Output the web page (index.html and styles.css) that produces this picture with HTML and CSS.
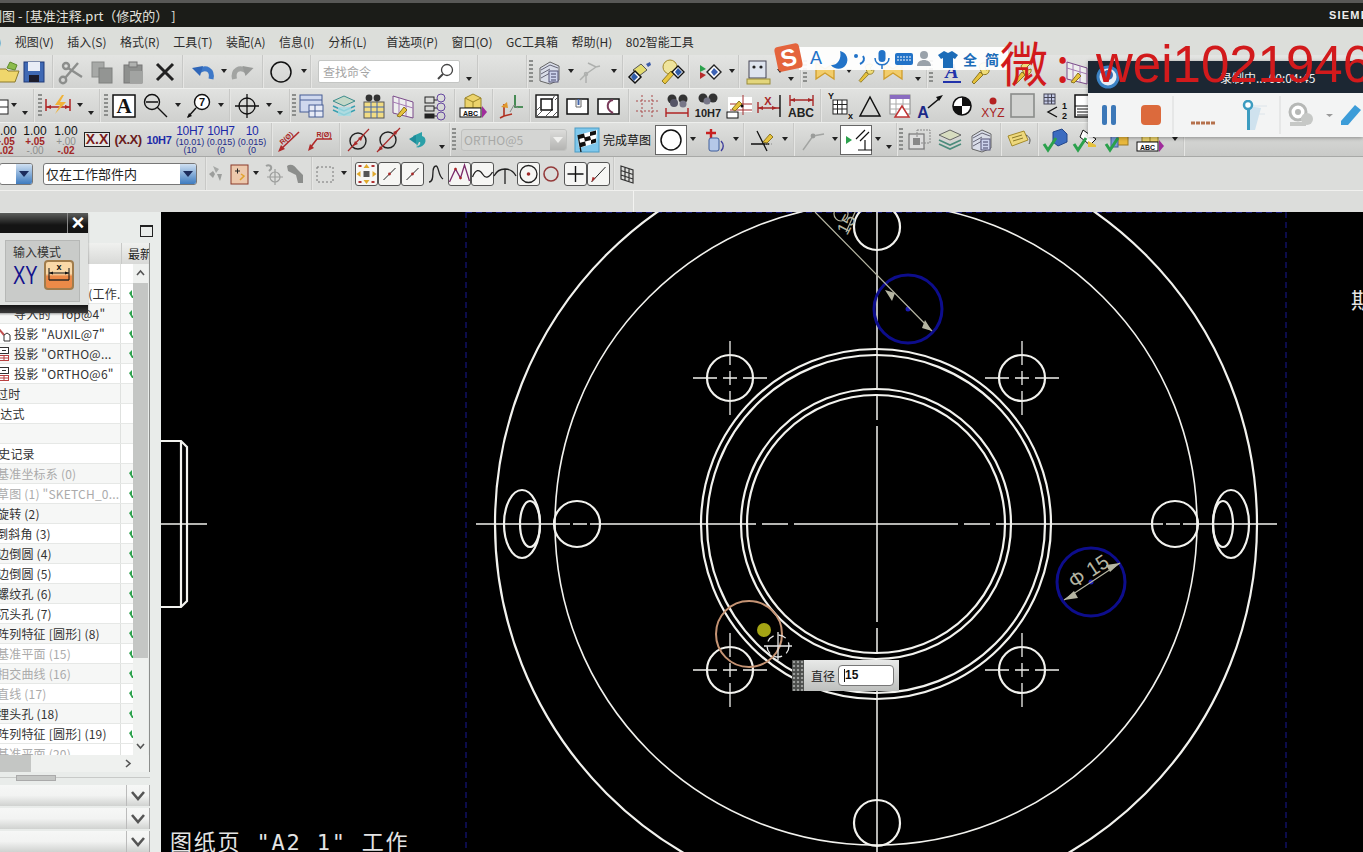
FILE: index.html
```html
<!DOCTYPE html>
<html lang="zh">
<head>
<meta charset="utf-8">
<title>基准注释.prt</title>
<link rel="stylesheet" href="styles.css">
</head>
<body>
<svg class="sprite" aria-hidden="true"><defs>
<g id="folder"><path d="M3 11h9l2 2h11l-4 11H3z" fill="#efd66c" stroke="#8b7a2c"/><path d="M13 10l3-6 7 3-2 5z" fill="#8cbc4c" stroke="#5d8a2c"/></g>
<g id="save"><rect x="4" y="4" width="20" height="20" fill="#3f69b4" stroke="#203a78"/><rect x="8" y="4" width="12" height="9" fill="#e9edf6"/><rect x="9" y="17" width="10" height="7" fill="#1c1c2c"/></g>
<g id="cut" fill="none" stroke="#8c8e8c" stroke-width="2.4"><circle cx="7" cy="22" r="3.2"/><circle cx="10" cy="8" r="3"/><path d="M9 20L22 5M12 10l14 9" /></g>
<g id="copy"><rect x="4" y="4" width="12" height="15" fill="#a7a9a7" stroke="#8a8c8a"/><rect x="11" y="10" width="13" height="15" fill="#939593" stroke="#7e807e"/></g>
<g id="paste"><rect x="5" y="7" width="18" height="18" fill="#8e908e" stroke="#777"/><rect x="10" y="4" width="8" height="5" fill="#b0b2b0" stroke="#777"/><rect x="11" y="13" width="13" height="12" fill="#a2a4a2"/></g>
<path id="del" d="M6 6l16 16M22 6L6 22" stroke="#222" stroke-width="3" fill="none"/>
<g id="undo"><path d="M24 21c2-9-5-13-12-8" fill="none" stroke="#3d78c8" stroke-width="5"/><path d="M5 10l11-2-3 10z" fill="#2f66b8"/></g>
<g id="redo"><path d="M4 21c-2-9 5-13 12-8" fill="none" stroke="#a2a4a2" stroke-width="5"/><path d="M23 10l-11-2 3 10z" fill="#989a98"/></g>
<circle id="circ" cx="14" cy="14" r="10" fill="none" stroke="#111" stroke-width="1.5"/>
<g id="layers"><path d="M5 10l10-6 9 4v14l-9 4-10-3z" fill="#d9dde8" stroke="#666"/><path d="M6 12l9-5 8 3M6 16l9-5M6 20l9-5" stroke="#667" fill="none"/><rect x="14" y="13" width="9" height="11" fill="#cdd3ec" stroke="#557"/><path d="M16 16h5M16 19h5M16 22h5" stroke="#446"/></g>
<g id="csys" fill="none" stroke="#aeb0ae" stroke-width="1.5"><path d="M10 16l10-7M10 16v9M10 16l-6 6M12 5l8 4 4-1"/><circle cx="10" cy="16" r="1.5"/></g>
<g id="eye"><path d="M15 6l6 6-8 6-6-6z" fill="#e4dc70" stroke="#555"/><path d="M20 6l4-2 1 3-3 2z" fill="#3c5ca8"/><path d="M9 13l6 6-6 6-6-6z" fill="#fff" stroke="#111" stroke-width="1.5"/><path d="M8 15l4 4-4 4-3-4z" fill="#2f5ca8"/></g>
<g id="wd"><circle cx="12" cy="9" r="7" fill="#efe49c" stroke="#a38a2a"/><path d="M4 23l9-10 3 3-9 10z" fill="#e9c640" stroke="#8d7a22"/><path d="M20 8l6 6-6 6-6-6z" fill="#fff" stroke="#111" stroke-width="1.4"/><path d="M20 10l4 4-4 4-3-4z" fill="#2f5ca8"/></g>
<g id="ad"><path d="M6 7v7l6-3z" fill="#2ba14c"/><path d="M6 21v-7l6 3z" fill="#b82c2c"/><path d="M20 7l7 7-7 7-7-7z" fill="#fff" stroke="#222" stroke-width="1.4"/><path d="M20 10l4 4-4 4-3-4z" fill="#3c62b4"/></g>
<g id="ruler"><rect x="6" y="3" width="17" height="17" fill="#dee4ee" stroke="#445"/><circle cx="11" cy="9" r="1.6" fill="#222"/><circle cx="18" cy="9" r="1.6" fill="#222"/><rect x="4" y="21" width="23" height="5" fill="#e3d67c" stroke="#998c3a"/></g>
<g id="bow"><path d="M5 5l9 6 9-6v16l-9-6-9 6z" fill="#f2cd6c" stroke="#cf9d2c" stroke-width="1.3"/></g>
<g id="wrench"><path d="M6 24l8-10 3 3-9 9z" fill="#e6c23c" stroke="#8c7622"/><path d="M13 8c2-4 7-4 9-2l-3 3 1 3 3-1c1 4-3 7-7 5z" fill="#efdc78" stroke="#8c7622"/></g>
<g id="aital"><text x="14" y="20" text-anchor="middle" class="it">A</text><path d="M5 24h18" stroke="#2233aa" stroke-width="2"/></g>
<g id="wmap"><path d="M4 4l20 6v16L4 21z" fill="#eee" stroke="#7a4a8a"/><path d="M4 10l20 6M10 6v16M17 8v16" stroke="#a47ab4" fill="none"/><path d="M8 24l7-9 3 3-7 7z" fill="#e6c23c" stroke="#8c7622"/></g>
<g id="piece"><rect x="-3" y="8" width="11" height="14" fill="#fff" stroke="#222"/><path d="M-3 15H8" stroke="#222"/></g>
<g id="dimf"><path d="M2 7v12M26 7v12M2 15h24" stroke="#b02424" stroke-width="1.5" fill="none"/><path d="M2 15l5-2v4zM26 15l-5-2v4z" fill="#b02424"/><path d="M18 3l-7 10h5l-5 9 11-12h-6l4-7z" fill="#f0b238"/></g>
<g id="abox"><rect x="3" y="3" width="22" height="22" fill="#fff" stroke="#111" stroke-width="1.5"/><text x="14" y="21" text-anchor="middle" class="sf">A</text></g>
<g id="zoom"><circle cx="10" cy="10" r="7.5" fill="none" stroke="#111" stroke-width="1.4"/><path d="M4 10h12M15 15l10 10" stroke="#111" stroke-width="1.4"/></g>
<g id="zoom7"><circle cx="17" cy="10" r="7.5" fill="#fff" stroke="#111" stroke-width="1.4"/><text x="17" y="14" text-anchor="middle" class="num">7</text><path d="M11 16L3 25" stroke="#111" stroke-width="1.4"/><path d="M2 26l2-5 3 3z" fill="#111"/></g>
<g id="cross" fill="none" stroke="#111" stroke-width="1.3"><circle cx="14" cy="14" r="8"/><path d="M14 2v24M2 14h24M14 12v4M12 14h4"/></g>
<g id="view"><rect x="3" y="3" width="22" height="17" fill="#cfd8ee" stroke="#465c94"/><rect x="12" y="13" width="14" height="12" fill="#e7ebf6" stroke="#465c94"/><path d="M12 19h14M18 13v12M3 8h22" stroke="#465c94"/></g>
<g id="layt"><path d="M3 9l11-5 11 5-11 5z" fill="#c4d8c8" stroke="#3c8c8c"/><path d="M3 14l11 5 11-5M3 18l11 5 11-5" fill="none" stroke="#38a0b0" stroke-width="1.4"/><rect x="8" y="15" width="13" height="9" fill="#a5dce4" opacity=".8"/></g>
<g id="bint"><rect x="5" y="10" width="20" height="16" fill="#f1dc84" stroke="#555"/><path d="M5 15h20M5 20h20M12 10v16M18 10v16" stroke="#4466aa"/><circle cx="10" cy="6" r="3.4" fill="#333"/><circle cx="18" cy="6" r="3.4" fill="#333"/></g>
<g id="l123" fill="none" stroke="#222"><rect x="3" y="5" width="9" height="6"/><rect x="3" y="14" width="9" height="5"/><rect x="3" y="22" width="9" height="4" fill="#222"/><path d="M12 8h3M12 16h3M12 24h3"/><circle cx="19" cy="6" r="4" stroke="#6648a0"/><circle cx="19" cy="15" r="4" stroke="#6648a0"/><circle cx="19" cy="24" r="4" stroke="#6648a0"/></g>
<g id="cube"><path d="M6 6l8-4 8 4v10H6z" fill="#ecd36c" stroke="#9a8428"/><path d="M6 6l8 4 8-4M14 10v6" stroke="#9a8428" fill="none"/><rect x="1" y="16" width="21" height="9" fill="#fff" stroke="#111"/><text x="11.500" y="24" text-anchor="middle" class="abc">ABC</text><path d="M23 14l5 6-5 6z" fill="#a02c9c"/></g>
<g id="csys2"><path d="M8 24V12M8 24l8-2M8 24l-4 2" stroke="#b03020" stroke-width="1.6" fill="none"/><path d="M19 3v12h8" stroke="#227733" stroke-width="1.6" fill="none"/><path d="M5 15l6-5 1 6z" fill="#e0982c"/><path d="M14 20l4-7 4 3" stroke="#888" fill="none"/></g>
<g id="hatch"><rect x="3" y="3" width="22" height="22" fill="#fff" stroke="#111" stroke-width="1.4"/><path d="M3 25l6-6M3 19l4-4M19 25l6-6M12 25l8-8M22 8l3-3M19 8l3-5" stroke="#555"/><rect x="8" y="7" width="11" height="11" fill="#fff" stroke="#111" stroke-width="1.5"/></g>
<g id="sl1"><rect x="3" y="7" width="21" height="15" fill="#fff" stroke="#111" stroke-width="1.5"/><path d="M12 7v8h5V7" fill="none" stroke="#666"/><rect x="13.500" y="7" width="2" height="6" fill="#4466aa"/></g>
<g id="sl2"><rect x="3" y="7" width="21" height="15" fill="#fff" stroke="#111" stroke-width="1.5"/><path d="M18 8c-6 1-8 9 0 13" fill="none" stroke="#7a3a5a" stroke-width="2"/></g>
<g id="dots" fill="none" stroke="#a84848" stroke-dasharray="2 2"><path d="M3 9h22M3 19h22M9 3v22M19 3v22"/></g>
<g id="bino"><circle cx="9" cy="7" r="4.5" fill="#333"/><circle cx="20" cy="7" r="4.500" fill="#333"/><circle cx="11" cy="11" r="4" fill="#556"/><circle cx="20" cy="12" r="3.500" fill="#778"/><path d="M3 16v9M25 16v9M3 21h22" stroke="#b02424" stroke-width="1.4"/></g>
<g id="bino2"><circle cx="9" cy="6" r="4.500" fill="#333"/><circle cx="19" cy="6" r="4.500" fill="#333"/><circle cx="13" cy="9" r="3.500" fill="#778"/><text x="14" y="25" text-anchor="middle" class="h7" fill="#222">10H7</text></g>
<g id="wtab"><path d="M3 5h24v15H3z" fill="#fff"/><path d="M18 3v20M5 12h22M5 18h22" stroke="#a43030"/><path d="M7 17l7-8 3 3-7 7z" fill="#e6c23c" stroke="#8c7622"/><rect x="2" y="20" width="11" height="6" fill="#fff" stroke="#111"/><circle cx="17" cy="14" r="1.500" fill="#111"/></g>
<g id="xdim"><path d="M3 10v11M3 16h22" stroke="#a82828" stroke-width="1.4"/><path d="M3 16l5-2v4zM22 16l-5-2v4z" fill="#a82828"/><text x="13" y="13" text-anchor="middle" class="x">X</text><path d="M25 3v22" stroke="#111" stroke-width="1.4"/></g>
<g id="abcd"><path d="M3 3v11M26 3v11M3 8h23" stroke="#a82828" stroke-width="1.4"/><path d="M3 8l5-2v4zM26 8l-5-2v4z" fill="#a82828"/><text x="14" y="25" text-anchor="middle" class="abc2">ABC</text></g>
<g id="gridxy"><rect x="8" y="8" width="14" height="14" fill="#fff" stroke="#222"/><path d="M8 12.500h14M8 17h14M12.500 8v14M17 8v14" stroke="#222"/><text x="3" y="7" class="tiny">Y</text><text x="23" y="27" class="tiny">x</text></g>
<path id="tri" d="M14 5l10 19H4z" fill="none" stroke="#111" stroke-width="1.5"/>
<g id="ttri"><rect x="4" y="3" width="20" height="19" fill="#fff" stroke="#888"/><rect x="4" y="3" width="20" height="4" fill="#8a6cc0"/><path d="M4 12h20M4 17h20M10 7v15M17 7v15" stroke="#aaa"/><path d="M16 14l7 11H9z" fill="#fff" stroke="#c03434" stroke-width="1.5"/></g>
<g id="aarrow"><text x="6" y="26" text-anchor="middle" class="ab">A</text><path d="M11 16L23 6" stroke="#111" stroke-width="1.6"/><path d="M26 3l-7 2 3 4z" fill="#111"/></g>
<g id="target"><circle cx="14" cy="14" r="9" fill="#fff" stroke="#111" stroke-width="1.6"/><path d="M14 5a9 9 0 0 1 9 9h-9zM14 23a9 9 0 0 1-9-9h9z" fill="#111"/></g>
<g id="xyz"><circle cx="14" cy="9" r="3.500" fill="#b42222"/><text x="14" y="25" text-anchor="middle" class="xyzt">XYZ</text></g>
<rect id="gsq" x="2" y="2" width="23" height="23" fill="#d2d3d1" stroke="#8a8c8a" stroke-width="1.6"/>
<g id="t12"><rect x="3" y="2" width="11" height="10" fill="#c6cce8" stroke="#445"/><path d="M3 5.500h11M3 9h11M7 2v10M10.500 2v10" stroke="#445"/><path d="M16 15l-9 5 9 5" fill="none" stroke="#111" stroke-width="1.4"/><text x="21" y="17" class="tiny">1</text><text x="21" y="27" class="tiny">2</text></g>
<g id="lines"><rect x="2" y="3" width="23" height="22" fill="#fff" stroke="#111" stroke-width="1.5"/><path d="M2 14h23M4 17h20M4 20h20M4 23h20" stroke="#111"/></g>
<g id="rd1"><path d="M24 6L5 24" stroke="#b02a2a" stroke-width="1.6"/><path d="M3 26l3-7 4 4z" fill="#b02a2a"/><text x="13" y="14" transform="rotate(-42 13 14)" text-anchor="middle" class="r">R(Ø)</text></g>
<g id="rd2"><path d="M26 13H11L4 22" stroke="#b02a2a" stroke-width="1.6" fill="none"/><path d="M2 25l2-7 4 4z" fill="#b02a2a"/><text x="18" y="11" text-anchor="middle" class="r">R(Ø)</text></g>
<g id="dia1"><circle cx="14" cy="15" r="8" fill="none" stroke="#222" stroke-width="1.4"/><path d="M25 3L4 25" stroke="#a82828" stroke-width="1.2"/><path d="M9 20l2-5 3 3zM19 10l-2 5-3-3z" fill="#a82828"/></g>
<g id="dia2"><circle cx="14" cy="14" r="8" fill="none" stroke="#222" stroke-width="1.4"/><path d="M26 2L3 26" stroke="#a82828" stroke-width="1.2"/><path d="M4 25l2-5 3 3zM24 4l-2 5-3-3z" fill="#a82828"/></g>
<g id="tealar"><path d="M10 10l9-4v4c5 1 5 9-2 11-2 1-4 0-4 0 3-1 5-3 4-5H16l-2 4z" fill="#2ba0a8"/><path d="M6 13l7-4v9z" fill="#1f8c9a"/></g>
<g id="flag"><rect x="0" y="0" width="24" height="24" fill="#7fc8ec" stroke="#4d9cc4" transform="translate(2 2)"/><path d="M5 9l19-5 -1 13-17 5z" fill="#fff"/><path d="M5 9l6-1.500 1 4-6 1.500zM17 6l6-1.500v4l-6 1.500zM11 11.500l6-1.500 1 4-6 1.500zM6 17l6-1.500 1 4-6 2zM18 14l5-1.500v4l-5 1.500z" fill="#111"/><path d="M5 9l3 17" stroke="#111" stroke-width="1.3"/></g>
<g id="cyl"><path d="M7 7h10M12 3v9" stroke="#c82020" stroke-width="2.400"/><rect x="10" y="12" width="10" height="13" rx="2" fill="#b5c8e8" stroke="#3f5e9c"/><path d="M22 15c3 3 3 7 0 10" fill="none" stroke="#3f3f9c" stroke-width="1.400"/></g>
<g id="slash"><path d="M3 18h18M9 5l10 20" stroke="#111" stroke-width="1.3"/><path d="M15 16l7-8 3 3-6 6z" fill="#e6c23c" stroke="#8c7622"/><path d="M17 18h8" stroke="#888" stroke-dasharray="1 1"/></g>
<g id="grayl"><path d="M5 24l10-14 11-2" fill="none" stroke="#a2a4a2" stroke-width="1.4"/><circle cx="15" cy="10" r="2.400" fill="#9a9c9a"/></g>
<g id="perp"><path d="M4 10v8l6-4z" fill="#2ba14c"/><path d="M14 13l9-9M18 15l9-9M16 24h14M23 14v10" stroke="#111" fill="none" stroke-width="1.200"/></g>
<g id="sqc"><rect x="4" y="8" width="15" height="15" fill="#ddd" stroke="#777" stroke-width="1.200"/><rect x="8" y="12" width="7" height="7" fill="#888"/><rect x="12" y="4" width="13" height="13" fill="none" stroke="#888" stroke-dasharray="2 1"/><path d="M4 8h.1M19 23h.1" stroke="#444" stroke-width="3"/></g>
<g id="layg"><path d="M3 9l11-5 11 5-11 5z" fill="#d7dcc0" stroke="#666"/><path d="M3 14l11 5 11-5M3 18l11 5 11-5" fill="none" stroke="#4c8c7c" stroke-width="1.600"/></g>
<g id="note"><path d="M4 10l16-5 4 9-16 6z" fill="#eed87c" stroke="#a38a2a"/><path d="M8 12l10-3M9 15l10-3" stroke="#8a7a2a"/><path d="M22 9c4 2 5 5 3 9" stroke="#555" fill="none"/></g>
<g id="chk1"><path d="M12 6l9-3 5 5v8l-9 4-5-4z" fill="#3c6cc0" stroke="#23468a"/><path d="M3 18l4 6 8-12" fill="none" stroke="#2ba14c" stroke-width="3"/></g>
<g id="chk2"><path d="M12 4l13 9-6 6-10-8z" fill="#fff" stroke="#111"/><path d="M3 18l4 6 8-12" fill="none" stroke="#2ba14c" stroke-width="3"/><path d="M17 15l8 4v2h-8z" fill="#e6c23c"/></g>
<g id="chk3"><rect x="14" y="5" width="11" height="14" fill="#e9b83c" stroke="#9a7a22"/><rect x="8" y="10" width="7" height="11" fill="#7a9ad8" stroke="#3f5e9c"/><path d="M3 18l4 6 8-12" fill="none" stroke="#2ba14c" stroke-width="3"/></g>
<g id="sel"><path d="M4 14l4-3 2 3-2 4z" fill="#9c9e9c"/><path d="M12 14l5 0-2 7z" fill="#9c9e9c"/><path d="M8 6l6 3-3 4z" fill="#a6a8a6"/></g>
<g id="sbox"><rect x="6" y="5" width="17" height="19" fill="#ecc8ac" stroke="#8a3a2a"/><path d="M10 11h5M12.500 8.500v5" stroke="#222"/><path d="M16 14l3 2-4 4" stroke="#e0a22c" stroke-width="1.500" fill="none"/></g>
<g id="c1" fill="none" stroke="#9c9e9c" stroke-width="1.200"><circle cx="15" cy="17" r="5"/><path d="M15 9v16M7 17h16"/><path d="M6 6c3-2 6 0 5 3l-2 2" stroke-width="2"/></g>
<g id="c2"><path d="M5 6c4-3 8 0 10 3l6 6v8h-5l-2-8-8-4z" fill="#8c8e8c"/></g>
<g id="dbox"><rect x="6" y="7" width="16" height="15" fill="none" stroke="#777" stroke-dasharray="2 2"/></g>
<g id="m1"><rect x="11" y="11" width="6" height="6" fill="#555"/><path d="M14 4l3 4h-6zM14 24l-3-4h6zM4 14l4-3v6zM24 14l-4 3v-6z" fill="#e0a92c"/><path d="M6 6h3M19 6h3M6 22h3M19 22h3" stroke="#b03030" stroke-width="2"/></g>
<g id="m2"><path d="M8 20L20 8" stroke="#222"/><circle cx="14" cy="14" r="1.400" fill="#a82828"/></g>
<path id="m3" d="M7 22c7 0 1-16 7-16 3 0 2 10 7 13" fill="none" stroke="#222" stroke-width="1.300"/>
<g id="m4"><path d="M4 22l6-13 5 9 4-13 5 16" fill="none" stroke="#7a2a6a" stroke-width="1.300"/><circle cx="10" cy="9" r="1.300" fill="#a22"/><circle cx="15" cy="18" r="1.300" fill="#a22"/></g>
<path id="m5" d="M4 17c3-8 7-8 10-3s6 4 10-2" fill="none" stroke="#222" stroke-width="1.300"/>
<g id="m6" fill="none" stroke="#222" stroke-width="1.300"><path d="M3 16c3-6 7-7 11-7s8 1 11 7M14 9v15"/></g>
<g id="m7"><circle cx="14" cy="14" r="8.500" fill="none" stroke="#222" stroke-width="1.300"/><circle cx="14" cy="14" r="1.800" fill="#a02a2a"/></g>
<circle id="m8" cx="14" cy="14" r="7" fill="none" stroke="#943a3a" stroke-width="1.600"/>
<path id="m9" d="M14 6v16M6 14h16" stroke="#111" stroke-width="1.400"/>
<g id="m10"><path d="M7 22L21 7" stroke="#222"/><path d="M11 18l-4 4 1-5z" fill="#a82828"/></g>
<g id="grid" fill="none" stroke="#333" stroke-width="1.200"><path d="M8 6l12 4v13L8 19zM8 10.500l12 4M8 15l12 4M12 7.500v13M16 9v13"/></g>
<g id="tick"><path d="M2 6l3-3v5l3 3-3 0z" fill="#2ba14c"/></g>
<g id="ortho"><rect x="0.500" y="1.500" width="9" height="6" fill="#fff" stroke="#333"/><path d="M3 4.500h4" stroke="#333"/><rect x="0.500" y="9.500" width="9" height="5" fill="#fff" stroke="#b84040"/><path d="M0 12h10M5 9v6" stroke="#b84040"/></g>
</defs></svg>

<div class="screen">
  <header class="title"><span class="title-text">制图 - [基准注释.prt（修改的） ]</span><span class="siemens">SIEMENS</span></header>
  <nav class="menu">
    <span>文件(F)</span><span>视图(V)</span><span>插入(S)</span><span>格式(R)</span><span>工具(T)</span><span>装配(A)</span><span>信息(I)</span><span>分析(L)</span><span class="g7">首选项(P)</span><span>窗口(O)</span><span>GC工具箱</span><span>帮助(H)</span><span>802智能工具</span>
  </nav>

  <div class="tb r1">
    <svg width="16" height="28" viewBox="6 0 16 28"><use href="#folder"/></svg>
    <svg width="36" height="28" viewBox="0 0 28 28"><use href="#save"/></svg><i class="sep"></i>
    <svg width="32" height="28" viewBox="0 0 28 28"><use href="#cut"/></svg>
    <svg width="32" height="28" viewBox="0 0 28 28"><use href="#copy"/></svg>
    <svg width="30" height="28" viewBox="0 0 28 28"><use href="#paste"/></svg>
    <svg width="34" height="28" viewBox="0 0 28 28"><use href="#del"/></svg><i class="sep"></i>
    <svg width="34" height="28" viewBox="0 0 28 28"><use href="#undo"/></svg><i class="dd"></i>
    <svg width="31" height="28" viewBox="0 0 28 28"><use href="#redo"/></svg><i class="sep m2"></i>
    <svg width="34" height="28" viewBox="0 0 28 28"><use href="#circ"/></svg><i class="dd"></i><i class="sep m1"></i>
    <div class="search"><span>查找命令</span><svg width="20" height="20" viewBox="0 0 20 20"><circle cx="12" cy="8" r="5.500" fill="#fff" stroke="#444" stroke-width="1.300"/><path d="M8 12l-5 5" stroke="#444" stroke-width="2"/></svg></div>
    <i class="ddl m3"></i><i class="sep m3"></i><i class="sep m47"></i><i class="grip m1"></i>
    <svg width="32" height="28" viewBox="0 0 28 28"><use href="#layers"/></svg><i class="dd"></i>
    <svg width="28" height="28" viewBox="0 0 28 28"><use href="#csys"/></svg><i class="dd m4"></i><i class="sep m3"></i>
    <svg width="32" height="28" viewBox="0 0 28 28"><use href="#eye"/></svg>
    <svg width="32" height="28" viewBox="0 0 28 28"><use href="#wd"/></svg><i class="sep"></i>
    <svg width="36" height="28" viewBox="0 0 28 28"><use href="#ad"/></svg><i class="dd"></i><i class="sep m1"></i>
    <svg width="34" height="28" viewBox="0 0 28 28"><use href="#ruler"/></svg><i class="dd"></i><i class="ddl"></i><i class="sep m4"></i><i class="grip m1"></i>
    <svg width="36" height="28" viewBox="0 0 28 28"><use href="#bow"/></svg><i class="dd"></i>
    <svg width="24" height="28" viewBox="0 0 28 28"><use href="#wrench"/></svg>
    <svg width="30" height="28" viewBox="0 0 28 28"><use href="#bow"/></svg><i class="ddl m4"></i><i class="sep m3"></i><i class="grip m1"></i>
    <svg width="38" height="28" viewBox="0 0 28 28"><use href="#aital"/></svg>
    <svg width="18" height="28" viewBox="5 0 18 28"><use href="#wrench"/></svg>
    <svg width="66" height="28" viewBox="0 0 28 28"><use href="#wrench"/></svg>
    <svg width="44" height="28" viewBox="0 0 28 28"><use href="#wmap"/></svg>
  </div>

  <div class="tb r2">
    <svg width="8" height="28" viewBox="0 0 8 28"><use href="#piece"/></svg><i class="dd"></i><i class="ddl"></i><i class="sep m3"></i><i class="grip m3"></i>
    <svg width="32" height="28" viewBox="0 0 28 28"><use href="#dimf"/></svg><i class="dd"></i><i class="ddl"></i><i class="sep m3"></i><i class="grip m3"></i>
    <svg width="32" height="28" viewBox="0 0 28 28"><use href="#abox"/></svg>
    <svg width="32" height="28" viewBox="0 0 28 28"><use href="#zoom"/></svg><i class="dd"></i>
    <svg width="32" height="28" viewBox="0 0 28 28"><use href="#zoom7"/></svg><i class="dd"></i><i class="sep m3"></i>
    <svg width="32" height="28" viewBox="0 0 28 28"><use href="#cross"/></svg><i class="dd"></i><i class="ddl"></i><i class="sep m4"></i><i class="grip m1"></i>
    <svg width="30" height="28" viewBox="0 0 28 28"><use href="#view"/></svg>
    <svg width="36" height="28" viewBox="0 0 28 28"><use href="#layt"/></svg>
    <svg width="22" height="28" viewBox="3 0 22 28"><use href="#bint"/></svg>
    <svg width="38" height="28" viewBox="0 0 28 28"><use href="#wmap"/></svg>
    <svg width="28" height="28" viewBox="0 0 28 28"><use href="#l123"/></svg><i class="sep m4"></i>
    <svg width="34" height="28" viewBox="0 0 28 28"><use href="#cube"/></svg><i class="sep m2"></i>
    <svg width="32" height="28" viewBox="0 0 28 28"><use href="#csys2"/></svg><i class="sep m3"></i>
    <svg width="32" height="28" viewBox="0 0 28 28"><use href="#hatch"/></svg>
    <svg width="30" height="28" viewBox="0 0 28 28"><use href="#sl1"/></svg>
    <svg width="32" height="28" viewBox="0 0 28 28"><use href="#sl2"/></svg><i class="sep m3"></i>
    <svg width="34" height="28" viewBox="0 0 28 28"><use href="#dots"/></svg>
    <svg width="26" height="28" viewBox="1 0 26 28"><use href="#bino"/></svg>
    <svg width="36" height="28" viewBox="0 0 28 28"><use href="#bino2"/></svg>
    <svg width="26" height="28" viewBox="1 0 26 28"><use href="#wtab"/></svg>
    <svg width="34" height="28" viewBox="0 0 28 28"><use href="#xdim"/></svg>
    <svg width="30" height="28" viewBox="0 0 28 28"><use href="#abcd"/></svg><i class="sep m4"></i>
    <svg width="34" height="28" viewBox="0 0 28 28"><use href="#gridxy"/></svg>
    <svg width="28" height="28" viewBox="0 0 28 28"><use href="#tri"/></svg>
    <svg width="32" height="28" viewBox="0 0 28 28"><use href="#ttri"/></svg>
    <svg width="30" height="28" viewBox="0 0 28 28"><use href="#aarrow"/></svg>
    <svg width="32" height="28" viewBox="0 0 28 28"><use href="#target"/></svg>
    <svg width="30" height="28" viewBox="0 0 28 28"><use href="#xyz"/></svg>
    <svg width="30" height="28" viewBox="0 0 28 28"><use href="#gsq"/></svg>
    <svg width="34" height="28" viewBox="0 0 28 28"><use href="#t12"/></svg>
    <svg width="30" height="28" viewBox="0 0 28 28"><use href="#lines"/></svg>
  </div>

  <div class="tb r3">
    <div class="st first"><b>1.00</b><em>+.05</em><em>-.02</em></div>
    <div class="st"><b>1.00</b><em>+.05</em><u>-.00</u></div>
    <div class="st w32"><b>1.00</b><u>+.00</u><em>-.02</em></div>
    <div class="xx"><span>X.X</span></div>
    <div class="xp">(X.X)</div>
    <div class="h">10H7</div>
    <div class="hs w32"><b>10H7</b><span>(10.01)</span><span>(10</span></div>
    <div class="hs"><b>10H7</b><span>(0.015)</span><span>(0</span></div>
    <div class="hs w32"><b>10</b><span>(0.015)</span><span>(0</span></div><i class="sep m3"></i>
    <svg width="32" height="28" viewBox="0 0 28 28"><use href="#rd1"/></svg>
    <svg width="30" height="28" viewBox="0 0 28 28"><use href="#rd2"/></svg><i class="sep m4"></i>
    <svg width="34" height="28" viewBox="0 0 28 28"><use href="#dia1"/></svg>
    <svg width="26" height="28" viewBox="1 0 26 28"><use href="#dia2"/></svg>
    <svg width="32" height="28" viewBox="0 0 28 28"><use href="#tealar"/></svg><i class="ddl m3"></i><i class="sep m2"></i><i class="grip m1"></i>
    <div class="combo off"><span>ORTHO@5</span><i class="cb"></i></div>
    <svg class="m6" width="28" height="28" viewBox="0 0 28 28"><use href="#flag"/></svg>
    <span class="lbl">完成草图</span>
    <div class="ib m4"><svg width="30" height="28" viewBox="0 0 28 28"><use href="#circ"/></svg></div><i class="dd"></i>
    <svg width="30" height="28" viewBox="0 0 28 28"><use href="#cyl"/></svg><i class="dd m2"></i><i class="sep m2"></i>
    <svg width="34" height="28" viewBox="0 0 28 28"><use href="#slash"/></svg><i class="dd"></i><i class="sep m3"></i>
    <svg width="34" height="28" viewBox="0 0 28 28"><use href="#grayl"/></svg><i class="dd"></i>
    <div class="ib"><svg width="30" height="28" viewBox="0 0 28 28"><use href="#perp"/></svg></div><i class="dd"></i><i class="ddl"></i><i class="sep m2"></i><i class="grip m1"></i>
    <svg width="32" height="28" viewBox="0 0 28 28"><use href="#sqc"/></svg>
    <svg width="30" height="28" viewBox="0 0 28 28"><use href="#layg"/></svg>
    <svg width="32" height="28" viewBox="0 0 28 28"><use href="#layers"/></svg><i class="sep m3"></i>
    <svg width="32" height="28" viewBox="0 0 28 28"><use href="#note"/></svg><i class="sep m3"></i>
    <svg width="32" height="28" viewBox="0 0 28 28"><use href="#chk1"/></svg>
    <svg width="28" height="28" viewBox="0 0 28 28"><use href="#chk2"/></svg>
    <svg width="36" height="28" viewBox="0 0 28 28"><use href="#chk3"/></svg>
    <svg width="30" height="28" viewBox="0 0 28 28"><use href="#cube"/></svg><i class="dd m4"></i><i class="sep m3"></i>
  </div>

  <div class="tb r4">
    <div class="combo c1"><i class="cb blue"></i></div>
    <div class="combo c2"><span>仅在工作部件内</span><i class="cb blue"></i></div><i class="sep m8"></i>
    <svg width="24" height="28" viewBox="2 0 24 28"><use href="#sel"/></svg>
    <svg width="16" height="28" viewBox="6 0 16 28"><use href="#sbox"/></svg><i class="dd m3"></i>
    <svg width="26" height="28" viewBox="1 0 26 28"><use href="#c1"/></svg>
    <svg width="18" height="28" viewBox="5 0 18 28"><use href="#c2"/></svg><i class="sep m6"></i>
    <svg width="24" height="28" viewBox="2 0 24 28"><use href="#dbox"/></svg><i class="dd m1"></i><i class="sep m2"></i>
    <svg class="bt m2" width="21" height="22" viewBox="3.500 3 21 22"><use href="#m1"/></svg>
    <svg class="bt" width="21" height="22" viewBox="3.500 3 21 22"><use href="#m2"/></svg>
    <svg class="bt" width="21" height="22" viewBox="3.500 3 21 22"><use href="#m2"/></svg>
    <svg width="24" height="28" viewBox="2 0 24 28"><use href="#m3"/></svg>
    <svg class="bt" width="21" height="22" viewBox="3.500 3 21 22"><use href="#m4"/></svg>
    <svg class="bt" width="21" height="22" viewBox="3.500 3 21 22"><use href="#m5"/></svg>
    <svg width="22" height="28" viewBox="3 0 22 28"><use href="#m6"/></svg>
    <svg class="bt m1" width="21" height="22" viewBox="3.500 3 21 22"><use href="#m7"/></svg>
    <svg width="22" height="28" viewBox="3 0 22 28"><use href="#m8"/></svg>
    <svg class="bt m2" width="21" height="22" viewBox="3.500 3 21 22"><use href="#m9"/></svg>
    <svg class="bt" width="21" height="22" viewBox="3.500 3 21 22"><use href="#m10"/></svg><i class="sep m3"></i>
    <svg width="24" height="28" viewBox="2 0 24 28"><use href="#grid"/></svg>
  </div>

  <div class="status"><div class="status-a"></div><div class="status-b"></div></div>

  <main class="main">
    <aside class="panel">
      <div class="panel-top"><i class="maxbox"></i></div>
      <div class="nav">
        <div class="nav-head"><span class="nh1"></span><span class="nh2">最新</span></div>
        <div class="nav-body">
          <div class="rows">
            <div class="row"><span class="t"></span><span class="c"></span></div>
            <div class="row"><span class="t ind0">图纸页 "A2_1" (工作...</span><span class="c"><svg width="10" height="14" viewBox="0 0 10 14"><use href="#tick"/></svg></span></div>
            <div class="row alt"><span class="t ind">导入的 "Top@4"</span><span class="c"><svg width="10" height="14" viewBox="0 0 10 14"><use href="#tick"/></svg></span></div>
            <div class="row"><svg class="ri" width="14" height="16" viewBox="0 0 14 16"><path d="M0 3l5 6" stroke="#c05050" stroke-width="2"/><path d="M5 9l3-2 3 2v6H5z" fill="#fff" stroke="#333"/></svg><span class="t">投影 "AUXIL@7"</span><span class="c"><svg width="10" height="14" viewBox="0 0 10 14"><use href="#tick"/></svg></span></div>
            <div class="row alt"><svg class="ri" width="14" height="16" viewBox="0 0 14 16"><use href="#ortho"/></svg><span class="t">投影 "ORTHO@...</span><span class="c"><svg width="10" height="14" viewBox="0 0 10 14"><use href="#tick"/></svg></span></div>
            <div class="row"><svg class="ri" width="14" height="16" viewBox="0 0 14 16"><use href="#ortho"/></svg><span class="t">投影 "ORTHO@6"</span><span class="c"><svg width="10" height="14" viewBox="0 0 10 14"><use href="#tick"/></svg></span></div>
            <div class="row alt"><span class="t k1">过时</span><span class="c"></span></div>
            <div class="row"><span class="t k2">表达式</span><span class="c"></span></div>
            <div class="row alt"><span class="t"></span><span class="c"></span></div>
            <div class="row"><span class="t k3">历史记录</span><span class="c"></span></div>
            <div class="row alt off"><span class="t k">基准坐标系 (0)</span><span class="c"><svg width="10" height="14" viewBox="0 0 10 14"><use href="#tick"/></svg></span></div>
            <div class="row off"><span class="t k">草图 (1) "SKETCH_0...</span><span class="c"><svg width="10" height="14" viewBox="0 0 10 14"><use href="#tick"/></svg></span></div>
            <div class="row alt"><span class="t k">旋转 (2)</span><span class="c"><svg width="10" height="14" viewBox="0 0 10 14"><use href="#tick"/></svg></span></div>
            <div class="row"><span class="t k4">倒斜角 (3)</span><span class="c"><svg width="10" height="14" viewBox="0 0 10 14"><use href="#tick"/></svg></span></div>
            <div class="row alt"><span class="t k">边倒圆 (4)</span><span class="c"><svg width="10" height="14" viewBox="0 0 10 14"><use href="#tick"/></svg></span></div>
            <div class="row"><span class="t k">边倒圆 (5)</span><span class="c"><svg width="10" height="14" viewBox="0 0 10 14"><use href="#tick"/></svg></span></div>
            <div class="row alt"><span class="t k">螺纹孔 (6)</span><span class="c"><svg width="10" height="14" viewBox="0 0 10 14"><use href="#tick"/></svg></span></div>
            <div class="row"><span class="t k">沉头孔 (7)</span><span class="c"><svg width="10" height="14" viewBox="0 0 10 14"><use href="#tick"/></svg></span></div>
            <div class="row alt"><span class="t k">阵列特征 [圆形] (8)</span><span class="c"><svg width="10" height="14" viewBox="0 0 10 14"><use href="#tick"/></svg></span></div>
            <div class="row off"><span class="t k">基准平面 (15)</span><span class="c"><svg width="10" height="14" viewBox="0 0 10 14"><use href="#tick"/></svg></span></div>
            <div class="row alt off"><span class="t k">相交曲线 (16)</span><span class="c"><svg width="10" height="14" viewBox="0 0 10 14"><use href="#tick"/></svg></span></div>
            <div class="row off"><span class="t k">直线 (17)</span><span class="c"><svg width="10" height="14" viewBox="0 0 10 14"><use href="#tick"/></svg></span></div>
            <div class="row alt"><span class="t k">埋头孔 (18)</span><span class="c"><svg width="10" height="14" viewBox="0 0 10 14"><use href="#tick"/></svg></span></div>
            <div class="row"><span class="t k">阵列特征 [圆形] (19)</span><span class="c"><svg width="10" height="14" viewBox="0 0 10 14"><use href="#tick"/></svg></span></div>
            <div class="row off"><span class="t k">基准平面 (20)</span><span class="c"></span></div>
          </div>
          <div class="vscroll">
            <svg class="arr" width="15" height="18" viewBox="0 0 15 18"><path d="M4 11l3.500-4 3.500 4" fill="none" stroke="#555" stroke-width="1.600"/></svg>
            <div class="thumb"></div>
            <div class="track"></div>
            <svg class="arr" width="15" height="18" viewBox="0 0 15 18"><path d="M4 7l3.500 4 3.500-4" fill="none" stroke="#555" stroke-width="1.600"/></svg>
          </div>
        </div>
        <div class="hscroll"><div class="hthumb"></div><svg width="14" height="17" viewBox="0 0 14 17"><path d="M5 5l4 3.500-4 3.500" fill="none" stroke="#555" stroke-width="1.600"/></svg></div>
      </div>
      <div class="resizer"><i></i></div>
      <div class="sec"><svg width="22" height="21" viewBox="0 0 22 21"><path d="M5 7l6 7 6-7" fill="none" stroke="#555" stroke-width="2.600"/></svg></div>
      <div class="sec"><svg width="22" height="21" viewBox="0 0 22 21"><path d="M5 7l6 7 6-7" fill="none" stroke="#555" stroke-width="2.600"/></svg></div>
      <div class="sec"><svg width="22" height="21" viewBox="0 0 22 21"><path d="M5 7l6 7 6-7" fill="none" stroke="#555" stroke-width="2.600"/></svg></div>
    </aside>

    <svg class="cad" viewBox="161 212 1202 640" width="1202" height="640">
      <g fill="none" stroke="#14147a" stroke-width="1.200" stroke-dasharray="6 4">
        <path d="M466 212v640M1286 212v640M466 212.500h820"/>
      </g>
      <g fill="none" stroke="#f2f2ee" stroke-width="2.200">
        <circle cx="876" cy="524" r="381"/>
        <circle cx="876" cy="524" r="321" stroke-width="1.600"/>
        <circle cx="876" cy="524" r="175"/><circle cx="876" cy="524" r="169"/>
        <circle cx="876" cy="524" r="135"/><circle cx="876" cy="524" r="129"/>
        <circle cx="730" cy="378" r="23"/><circle cx="1022" cy="378" r="23"/>
        <circle cx="730" cy="670" r="23"/><circle cx="1022" cy="670" r="23"/>
        <circle cx="877" cy="227" r="23"/><circle cx="877" cy="823" r="23"/>
        <circle cx="577" cy="524" r="23"/><circle cx="1175" cy="524" r="23"/>
        <ellipse cx="522" cy="524" rx="18" ry="34"/><ellipse cx="530" cy="524" rx="10" ry="23"/>
        <ellipse cx="1231" cy="524" rx="18" ry="34"/><ellipse cx="1223" cy="524" rx="10" ry="23"/>
        <path d="M161 441h20l6 6v154l-6 6h-20M181 441v166"/>
      </g>
      <g fill="none" stroke="#f2f2ee" stroke-width="1.500">
        <path d="M476 524h94M573 524h14M590 524h166M762 524h26M794 524h164M964 524h26M996 524h167M1166 524h14M1183 524h94"/>
        <path d="M877 212v176M877 394v26M877 426v196M877 628v26M877 660v192"/>
        <path d="M161 524h46"/>
        <g stroke-dasharray="13 2 9 6 14 6 9 2 13" stroke-width="1.300">
          <path d="M693 378h75M985 378h75M693 670h75M985 670h75"/>
          <path d="M730 341v75M1022 341v75M730 633v75M1022 633v75"/>
        </g>
      </g>
      <g fill="none" stroke="#0d0d8c" stroke-width="3">
        <circle cx="908" cy="309" r="34"/><circle cx="1091" cy="582" r="34"/>
      </g>
      <circle cx="908" cy="309" r="2.500" fill="#1a1ab0"/><circle cx="1091" cy="582" r="2.500" fill="#1a1ab0"/>
      <g stroke="#b5b5a2" stroke-width="1.200" fill="none">
        <path d="M815 212L932 331M1064 600l56-37"/>
        <circle cx="841" cy="214" r="7" />
        <path d="M846 232l10-22"/>
      </g>
      <path d="M885 290l10 3-3 8zM932 331l-10-3 3-8zM1064 600l10-9 4 7zM1120 563l-10 9-4-7z" fill="#b5b5a2"/>
      <text class="dimt" transform="translate(1074 589) rotate(-33)">Φ 15</text>
      <text class="dimt sm" transform="translate(847 236) rotate(-62)">15</text>
      <circle cx="749" cy="634" r="33" fill="none" stroke="#c69474" stroke-width="2"/>
      <circle cx="764" cy="630" r="7" fill="#a4a414"/>
      <g fill="none" stroke="#e8e8e8" stroke-width="1.300">
        <path d="M764 646h28M778 632v28"/>
        <circle cx="778" cy="646" r="11" stroke-dasharray="8 5"/>
      </g>
      <text class="sheet" x="170" y="850">图纸页 "A2_1" 工作</text>
      <text class="sheet" x="1351" y="308">期</text>
    </svg>
  </main>

  <div class="dialog">
    <div class="dlg-title"><span class="close">×</span></div>
    <div class="dlg-body">
      <div class="dlg-group">
        <div class="dlg-label">输入模式</div>
        <div class="dlg-row">
          <span class="xy">XY</span>
          <div class="modebtn"><svg width="26" height="26" viewBox="0 0 26 26"><path d="M3 6v12M23 6v12M3 11h20" stroke="#111"/><path d="M3 11l4-1.500v3zM23 11l-4-1.500v3z" fill="#111"/><text x="13" y="8" text-anchor="middle" class="tiny">x</text><path d="M3 18h20" stroke="#222" stroke-width="1.400"/></svg></div>
        </div>
      </div>
    </div>
    <div class="dlg-foot"></div>
  </div>

  <div class="dimin"><i class="dim-grip"></i><span>直径</span><div class="dim-input"><i class="caret"></i>15</div></div>

  <div class="ime">
    <span class="ime-s">S</span>
    <div class="ime-bar">
      <span class="ia">A</span>
      <svg width="22" height="22" viewBox="0 0 22 22"><path d="M13 3a9 9 0 1 1-9 14c6 1 11-6 9-14z" fill="#2273c8"/></svg>
      <svg width="22" height="22" viewBox="0 0 22 22"><circle cx="7" cy="8" r="2" fill="#2273c8"/><path d="M14 8c2 3 1 6-3 8" stroke="#2273c8" stroke-width="2" fill="none"/></svg>
      <svg width="22" height="22" viewBox="0 0 22 22"><rect x="7.500" y="2" width="7" height="12" rx="3.500" fill="#2273c8"/><path d="M4 10c0 9 14 9 14 0M11 17v4" stroke="#2273c8" stroke-width="1.500" fill="none"/></svg>
      <svg width="22" height="22" viewBox="0 0 22 22"><rect x="2" y="5" width="18" height="12" rx="2" fill="#2273c8"/><path d="M4 9h14M4 12h14" stroke="#fff" stroke-dasharray="2 1"/></svg>
      <svg width="22" height="22" viewBox="0 0 22 22"><circle cx="9" cy="7" r="4" fill="#9aa2aa"/><path d="M2 18c0-8 14-8 14 0z" fill="#9aa2aa"/></svg>
      <svg width="22" height="22" viewBox="0 0 22 22"><path d="M7 3l4 2 4-2 6 4-3 4-2-1v10H6V10l-2 1-3-4z" fill="#1c6cb8"/></svg>
      <span class="ic">全</span><span class="ic">简</span>
    </div>
  </div>

  <div class="rec">
    <div class="rec-head"><svg width="28" height="28" viewBox="0 0 28 28"><circle cx="14" cy="14" r="10" fill="#e6eef6" stroke="#3b82c4" stroke-width="3"/><circle cx="14" cy="12" r="5" fill="#3b6cb0"/></svg><span>录制中... 00:04:45</span></div>
    <div class="rec-body">
      <svg width="42" height="24" viewBox="0 0 42 24"><rect x="14" y="2" width="5" height="20" rx="2" fill="#3c78b8"/><rect x="23" y="2" width="5" height="20" rx="2" fill="#3c78b8"/></svg>
      <svg width="42" height="24" viewBox="0 0 42 24"><rect x="11" y="2" width="20" height="20" rx="4" fill="#dc6a3c"/></svg>
      <i class="rsep"></i>
      <svg width="58" height="24" viewBox="0 0 58 24"><path d="M17 20h24" stroke="#b5714c" stroke-width="3" stroke-dasharray="4 1"/></svg>
      <svg width="40" height="30" viewBox="0 0 40 30"><path d="M17 6h18M17 14h16" stroke="#dce4ea"/><path d="M17 6l12 2-6 22h-6z" fill="#cfe2ee"/><rect x="15" y="4" width="3" height="26" fill="#3c9cc0"/><circle cx="16" cy="5" r="4" fill="#fff" stroke="#3c9cc0" stroke-width="2.500"/></svg>
      <i class="rsep m7"></i>
      <svg width="38" height="28" viewBox="0 0 38 28"><circle cx="17" cy="11" r="8" fill="#fff" stroke="#b6b8b6" stroke-width="3"/><circle cx="17" cy="11" r="3" fill="#b6b8b6"/><rect x="9" y="21" width="16" height="4" fill="#c6c8c6"/><circle cx="26" cy="18" r="6" fill="#c6c8c6"/></svg>
      <svg width="20" height="24" viewBox="0 0 20 24"><path d="M7 11h7l-3.500 3z" fill="#999"/></svg>
      <svg width="24" height="30" viewBox="0 0 24 30"><path d="M2 21L16 5l6 5L9 25H2z" fill="#3c9cd8"/></svg>
    </div>
  </div>

  <div class="mark"><span class="mark-cn">微:</span><span class="mark-id">wei1021946</span></div>
</div>
</body>
</html>
```
FILE: styles.css
```css
html,body{margin:0;padding:0;background:#000;}
body{width:1363px;height:852px;overflow:hidden;font-family:"Noto Sans","Noto Sans CJK SC",sans-serif;}
.sprite{position:absolute;width:0;height:0;}
.screen{position:relative;width:1363px;height:852px;overflow:hidden;display:flex;flex-direction:column;}

.title{height:27px;flex:none;box-sizing:border-box;border-top:3px solid #585856;background:#1b1c18;display:flex;justify-content:space-between;align-items:center;overflow:hidden;white-space:nowrap;color:#e3e3df;}
.title-text{margin-left:-11px;font-size:13px;font-family:"Noto Sans CJK SC",sans-serif;}
.siemens{margin-left:auto;margin-right:-34px;width:68px;font:bold 11px "Liberation Sans",sans-serif;letter-spacing:1.2px;color:#eee;}

.menu{height:28px;flex:none;background:#dcdeda;display:flex;align-items:center;gap:13.5px;font-size:12px;color:#2c2c2c;white-space:nowrap;font-family:"Noto Sans CJK SC",sans-serif;margin-left:-37.5px;padding-left:0;width:1400px;}
.menu .g7{margin-left:6px;}

.tb{flex:none;display:flex;align-items:center;white-space:nowrap;overflow:hidden;}
.tb svg{flex:none;overflow:visible;}
.r1{height:33px;background:linear-gradient(#e3e4e2,#d2d3d1);}
.r2{height:34px;background:linear-gradient(#e1e2e0,#cfd0ce);border-top:1px solid #eeefed;box-sizing:border-box;}
.r3{height:35px;background:linear-gradient(#dfe0de,#c9cac8);border-top:1px solid #eeefed;box-sizing:border-box;border-bottom:1px solid #a8a9a7;}
.r4{height:33px;background:#dcdddb;}

.sep{flex:none;width:2px;align-self:stretch;background:linear-gradient(90deg,#b9bab8,#f4f4f2);}
.grip{flex:none;width:4px;height:24px;background:repeating-linear-gradient(#8c8e8c 0 2px,transparent 2px 4px);}
.dd,.ddl{flex:none;width:11px;height:28px;position:relative;display:block;}
.dd::after,.ddl::after{content:"";position:absolute;left:3px;top:11px;border:3px solid transparent;border-top:4px solid #222;border-bottom:0;}
.ddl::after{top:19px;}
.m1{margin-left:1px;}.m2{margin-left:2px;}.m3{margin-left:3px;}.m4{margin-left:4px;}.m6{margin-left:6px;}.m7{margin-left:7px;}.m8{margin-left:8px;}.m47{margin-left:47px;}

.search{flex:none;margin-left:6px;width:142px;height:23px;box-sizing:border-box;background:#fff;border:1px solid #c4c6c4;border-radius:2px;display:flex;align-items:center;justify-content:space-between;padding:0 4px;font-size:12px;color:#a4a4a4;font-family:"Noto Sans CJK SC",sans-serif;}

.st{flex:none;width:30px;display:flex;flex-direction:column;align-items:center;font:10px/8px "Liberation Sans",sans-serif;}
.st.first{margin-left:-10px;}
.st.w32,.hs.w32{width:32px;}
.st b{font:12px/12px "Liberation Sans",sans-serif;color:#111;}
.st em{font:bold 10px/9px "Liberation Sans",sans-serif;color:#a22626;}
.st u{font:10px/9px "Liberation Sans",sans-serif;color:#8c8e8c;text-decoration:none;}
.xx{flex:none;width:30px;display:flex;justify-content:center;}
.xx span{border:1.500px solid #222;background:#e6e6e4;padding:0 1px;font:bold 14px/13px "Liberation Sans",sans-serif;color:#7a1a1a;}
.xp{flex:none;width:32px;text-align:center;font:bold 13px "Liberation Sans",sans-serif;color:#6a1c1c;letter-spacing:-.5px;}
.h{flex:none;width:30px;text-align:center;font:bold 11px "Liberation Sans",sans-serif;color:#1c2aa8;letter-spacing:-.3px;}
.hs{flex:none;width:30px;display:flex;flex-direction:column;align-items:center;font:9px/8px "Liberation Sans",sans-serif;color:#1c2a88;}
.hs b{font:12px/13px "Liberation Sans",sans-serif;color:#1c2aa8;letter-spacing:-.3px;}

.combo{flex:none;box-sizing:border-box;display:flex;align-items:center;justify-content:space-between;background:#fff;border:1px solid #777;border-radius:3px;font-size:12px;height:22px;overflow:hidden;font-family:"Noto Sans CJK SC",sans-serif;color:#222;}
.combo.off{margin-left:5px;width:106px;background:#d4d5d3;border-color:#c0c1bf;color:#a8a9a7;padding-left:2px;}
.c1{width:34px;margin-left:-1px;justify-content:flex-end;}
.c2{width:154px;margin-left:10px;padding-left:2px;font-size:13px;}
.cb{flex:none;width:16px;align-self:stretch;background:linear-gradient(#dcdcda,#b4b4b2);position:relative;display:block;}
.cb::after{content:"";position:absolute;left:3px;top:7px;border:5px solid transparent;border-top:6px solid #f0f0ee;border-bottom:0;}
.cb.blue{background:linear-gradient(#cfe0f2,#3f7cc0);}
.cb.blue::after{border-top-color:#1c2c5c;}
.lbl{flex:none;margin-left:2px;font-size:12px;color:#111;width:48px;font-family:"Noto Sans CJK SC",sans-serif;}
.ib{flex:none;box-sizing:border-box;width:32px;height:30px;background:#fff;border:1px solid #666;display:flex;align-items:center;justify-content:center;}
.ib svg{width:30px;}
.tb .bt{box-sizing:content-box;background:#f6f6f4;border:1px solid #555;border-radius:3px;overflow:hidden;}

.status{height:22px;flex:none;background:#dcdddb;display:flex;border-top:1px solid #f0f0ee;box-sizing:border-box;}
.status-a{width:633px;border-right:1px solid #f3f3f1;}
.status-b{flex:1;}

.main{flex:1;display:flex;min-height:0;}
.panel{flex:none;width:161px;box-sizing:border-box;background:#e9ecea;padding-right:11px;display:flex;flex-direction:column;overflow:hidden;}
.panel-top{height:31px;flex:none;display:flex;justify-content:flex-end;align-items:center;}
.maxbox{display:block;width:11px;height:9px;border:1.500px solid #222;border-top-width:2.500px;margin:6px -3px 0 0;}
.nav{flex:none;width:150px;height:529px;box-sizing:border-box;border-right:1px solid #8c8e8c;border-bottom:1px solid #8c8e8c;display:flex;flex-direction:column;}
.nav-head{height:21px;flex:none;display:flex;font-size:12px;color:#222;background:linear-gradient(#f0f1ef,#d8d9d7);font-family:"Noto Sans CJK SC",sans-serif;}
.nh1{width:121px;border-right:1px solid #c8c9c7;}
.nh2{flex:1;padding-left:6px;line-height:22px;overflow:hidden;white-space:nowrap;}
.nav-body{height:491px;flex:none;display:flex;overflow:hidden;}
.rows{width:133px;flex:none;overflow:hidden;}
.row{height:20px;box-sizing:border-box;border-bottom:1px solid #e6e8e6;background:#fff;display:flex;align-items:center;font-size:12px;letter-spacing:.2px;color:#333;white-space:nowrap;font-family:"Noto Sans CJK SC",sans-serif;position:relative;overflow:hidden;}
.row.alt{background:#f6f7f6;}
.row.off{color:#ababab;}
.t{width:121px;flex:none;box-sizing:border-box;border-right:1px solid #dfe1df;height:20px;line-height:19px;overflow:hidden;}
.t.ind{padding-left:14px;}
.t.ind0{padding-left:0;text-indent:6px;}
.row .ri{position:absolute;left:-1px;top:2px;}
.row .ri + .t{padding-left:14px;}
.k,.k1,.k2,.k3,.k4{text-indent:-3px;}
.k1{text-indent:-4px;}
.k2{text-indent:-12px;}
.k3{text-indent:-14px;}
.k4{text-indent:-4px;}
.c{flex:1;display:flex;align-items:center;padding-left:6px;}
.vscroll{flex:none;width:15px;background:#eff1ef;display:flex;flex-direction:column;}
.arr{flex:none;display:block;}
.thumb{height:375px;flex:none;background:#c4c6c4;margin-top:1px;}
.track{flex:1;}
.hscroll{height:17px;flex:none;background:#eff1ef;display:flex;justify-content:space-between;padding-right:14px;}
.hthumb{width:31px;background:#c4c6c4;}
.resizer{height:13px;flex:none;position:relative;}
.resizer::before{content:"";position:absolute;left:0;right:0;top:5px;height:1px;background:#c8cac8;}
.resizer i{display:block;position:absolute;left:16px;top:3px;width:38px;height:4px;background:#c4c6c4;border:1px solid #aaa;}
.sec{height:21px;flex:none;margin-bottom:2px;width:150px;background:linear-gradient(#f6f7f6 0,#f2f3f2 50%,#d0d2d0 100%);display:flex;justify-content:flex-end;border-right:1px solid #aaa;box-sizing:border-box;}
.sec svg{border-left:1px solid #bbb;}

.cad{flex:none;background:#000;display:block;}
.dimt{font:20px "Liberation Sans",sans-serif;fill:#b5b5a2;}
.dimt.sm{font-size:18px;}
.sheet{font:22px "DejaVu Sans Mono","Noto Sans CJK SC",monospace;fill:#e4e4e4;letter-spacing:1.8px;}

.it{font:italic bold 20px "Liberation Serif",serif;fill:#2233aa;}
.sf{font:bold 21px "Liberation Serif",serif;fill:#111;}
.num{font:bold 11px "Liberation Sans",sans-serif;fill:#111;}
.abc{font:bold 7px "Liberation Sans",sans-serif;fill:#111;}
.h7{font:bold 11px "Liberation Sans",sans-serif;}
.x{font:bold 11px "Liberation Sans",sans-serif;fill:#a82828;}
.abc2{font:bold 12px "Liberation Sans",sans-serif;fill:#222;}
.tiny{font:bold 9px "Liberation Sans",sans-serif;fill:#111;}
.ab{font:bold 16px "Liberation Sans",sans-serif;fill:#1c2a88;}
.xyzt{font:12px "Liberation Sans",sans-serif;fill:#a82424;}
.r{font:bold 7px "Liberation Sans",sans-serif;fill:#a82424;}

.dialog{position:absolute;left:-10px;top:213px;width:98px;height:100px;display:flex;flex-direction:column;box-shadow:0 1px 2px rgba(0,0,0,.4);}
.dlg-title{height:20px;flex:none;background:linear-gradient(#5c5e5c,#141414 60%);display:flex;justify-content:flex-end;}
.close{width:20px;border-left:1px solid #888;color:#fff;font:bold 22px/20px "Liberation Sans",sans-serif;text-align:center;}
.dlg-body{flex:1;background:#e0e2e0;padding:7px 8px 3px 15px;box-sizing:border-box;display:flex;}
.dlg-group{flex:1;background:#c9cbc9;border:1px solid #b6b8b6;padding-top:3px;display:flex;flex-direction:column;}
.dlg-label{font-size:12px;line-height:16px;color:#333;padding-left:7px;font-family:"Noto Sans CJK SC",sans-serif;}
.dlg-row{display:flex;align-items:center;gap:6px;padding-left:7px;}
.xy{flex:none;width:25px;font:25px "Liberation Sans",sans-serif;color:#12128c;transform:scaleX(.74);transform-origin:left center;letter-spacing:0;white-space:nowrap;}
.modebtn{width:30px;height:30px;box-sizing:border-box;border:2px solid #a07c4c;border-radius:4px;background:linear-gradient(#f9d8a8 45%,#ec8a48 55%);display:flex;align-items:center;justify-content:center;}
.dlg-foot{height:8px;flex:none;background:linear-gradient(#141414,#3a3a3a);}

.dimin{position:absolute;left:792px;top:660px;width:107px;height:31px;box-sizing:border-box;display:flex;align-items:center;background:linear-gradient(#e8e9e8,#bdbfbd);font-size:12px;color:#222;font-family:"Noto Sans CJK SC",sans-serif;}
.dim-grip{flex:none;width:12px;height:100%;background:radial-gradient(circle,#9a9c9a 1.3px,transparent 1.6px) 0 0/4px 4px,#4c4e4c;}
.dimin span{margin-left:7px;}
.dim-input{margin-left:3px;width:56px;height:21px;box-sizing:border-box;background:#fff;border:1px solid #777;border-radius:4px;padding-left:5px;font:bold 12px/19px "Liberation Sans",sans-serif;color:#111;display:flex;align-items:center;}
.caret{display:block;width:1px;height:13px;background:#111;}

.ime{position:absolute;left:775px;top:43px;display:flex;align-items:flex-start;height:30px;}
.ime-s{position:relative;z-index:1;width:25px;height:25px;margin:2px -2px 0 1px;border-radius:4px;background:#e4643c;color:#fff;font:bold 24px/25px "Liberation Sans",sans-serif;text-align:center;transform:rotate(-12deg);}
.ime-bar{margin-top:4px;width:209px;height:23px;background:rgba(255,255,255,.92);display:flex;align-items:center;gap:0;padding-left:6px;box-sizing:border-box;}
.ime-bar svg{flex:none;}
.ia{width:22px;flex:none;text-align:center;font:18px "Liberation Sans",sans-serif;color:#2273c8;}
.ic{width:22px;flex:none;text-align:center;font:bold 14px "Noto Sans CJK SC",sans-serif;color:#1c6cb8;}

.rec{position:absolute;left:1088px;top:61px;width:275px;height:76px;display:flex;flex-direction:column;box-shadow:0 1px 4px rgba(0,0,0,.35);overflow:hidden;}
.rec-head{height:32px;flex:none;background:#1c2733;display:flex;align-items:center;padding-left:6px;color:#eef0f2;font-size:12px;font-family:"Noto Sans CJK SC",sans-serif;}
.rec-head span{margin-left:98px;white-space:nowrap;}
.rec-body{flex:1;background:#f3f4f4;display:flex;align-items:center;}
.rec-body svg{flex:none;}
.rsep{flex:none;display:block;width:2px;height:38px;background:#e6e7e7;}
.mark{position:absolute;left:1000px;top:26px;white-space:nowrap;color:#d21a1c;display:flex;align-items:baseline;height:70px;}
.mark-cn{font:48px "Noto Sans CJK SC",sans-serif;width:96px;flex:none;letter-spacing:8px;}
.mark-id{font:51px "Liberation Sans",sans-serif;}
```
